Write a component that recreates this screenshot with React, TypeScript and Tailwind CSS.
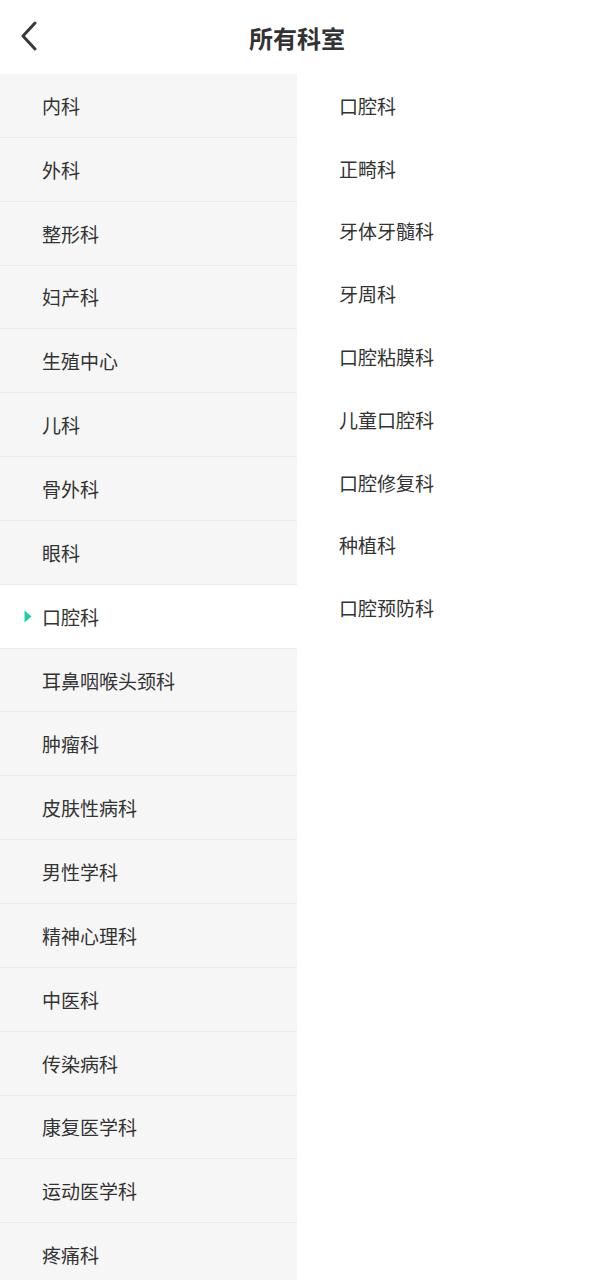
import { useState } from "react";

const departments = [
  "内科",
  "外科",
  "整形科",
  "妇产科",
  "生殖中心",
  "儿科",
  "骨外科",
  "眼科",
  "口腔科",
  "耳鼻咽喉头颈科",
  "肿瘤科",
  "皮肤性病科",
  "男性学科",
  "精神心理科",
  "中医科",
  "传染病科",
  "康复医学科",
  "运动医学科",
  "疼痛科",
];

const subDepartments = [
  "口腔科",
  "正畸科",
  "牙体牙髓科",
  "牙周科",
  "口腔粘膜科",
  "儿童口腔科",
  "口腔修复科",
  "种植科",
  "口腔预防科",
];

export default function App() {
  const [active, setActive] = useState("口腔科");

  return (
    <div
      className="w-[594px] h-[1280px] overflow-hidden bg-white text-[#333333] flex flex-col"
      style={{ fontFamily: '"Noto Sans CJK SC", "Noto Sans", sans-serif' }}
    >
      {/* header */}
      <div className="relative h-[74px] flex-shrink-0 flex items-center justify-center">
        <button className="absolute left-[19px] top-[20px] w-[20px] h-[32px] flex items-center justify-center">
          <svg width="18" height="30" viewBox="0 0 18 30" fill="none">
            <path
              d="M15 2 L3 15 L15 28"
              stroke="#3a3a3a"
              strokeWidth="3"
              strokeLinecap="round"
              strokeLinejoin="round"
            />
          </svg>
        </button>
        <h1 className="text-[24px] font-semibold leading-none mt-[2px] text-[#333333]">所有科室</h1>
      </div>

      <div className="flex flex-1 min-h-0">
        {/* left list */}
        <div className="w-[297px] flex-shrink-0 bg-[#f6f6f6] flex flex-col">
          {departments.map((d) => {
            const isActive = d === active;
            return (
              <div
                key={d}
                onClick={() => setActive(d)}
                className={
                  "relative h-[63.85px] flex-shrink-0 flex items-center pl-[42px] border-b border-[#ebebeb] text-[19px] cursor-pointer " +
                  (isActive ? "bg-white" : "")
                }
              >
                {isActive && (
                  <svg
                    className="absolute left-[24px] top-[25px]"
                    width="8"
                    height="13"
                    viewBox="0 0 8 13"
                  >
                    <path d="M0.5 0.5 L7.5 6.5 L0.5 12.5 Z" fill="#1ccfa6" />
                  </svg>
                )}
                <span className="leading-none">{d}</span>
              </div>
            );
          })}
        </div>

        {/* right list */}
        <div className="flex-1 flex flex-col pl-[42px]">
          {subDepartments.map((s) => (
            <div
              key={s}
              className="h-[62.8px] flex-shrink-0 flex items-center text-[19px]"
            >
              <span className="leading-none">{s}</span>
            </div>
          ))}
        </div>
      </div>
    </div>
  );
}
